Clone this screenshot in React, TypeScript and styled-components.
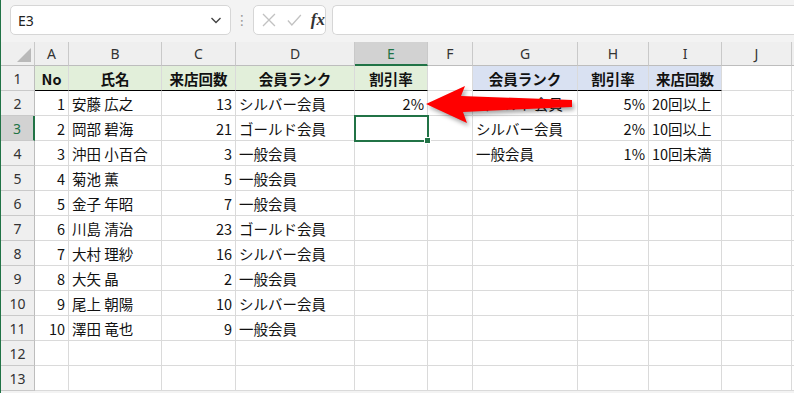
import React from "react";
import styled, { createGlobalStyle, css } from "styled-components";

const GlobalStyle = createGlobalStyle`
  html, body {
    margin: 0;
    padding: 0;
    background: #ffffff;
    overflow: hidden;
  }
`;

const GREEN = "#217346";
const GRID = "#dadada";

const Frame = styled.div`
  position: relative;
  width: 794px;
  height: 393px;
  box-sizing: border-box;
  border-left: 1px solid ${GREEN};
  background: #f3f3f3;
  overflow: hidden;
  font-family: "Noto Sans CJK JP", "Noto Sans", sans-serif;
`;

// 数式バー
const FormulaBar = styled.div`
  display: flex;
  align-items: center;
  height: 42px;
  padding: 5px 0 7px 9px;
  box-sizing: border-box;
`;

const Box = styled.div<{ $w?: number; $grow?: boolean }>`
  display: flex;
  align-items: center;
  height: 30px;
  box-sizing: border-box;
  background: #ffffff;
  border: 1px solid #d6d6d6;
  border-radius: 5px;
  ${(p) => p.$w && css`width: ${p.$w}px;`}
  ${(p) => p.$grow && css`flex: 1; margin-left: 6px; border-right: none; border-radius: 5px 0 0 5px;`}
`;

const NameText = styled.span`
  flex: 1;
  padding-left: 7px;
  font-family: "Noto Sans", "Liberation Sans", sans-serif;
  font-size: 14px;
  color: #222;
`;

const Dots = styled.span`
  width: 22px;
  text-align: center;
  color: #9a9a9a;
  font-size: 14px;
  font-family: "DejaVu Sans", sans-serif;
`;

const FxIcon = styled.span`
  font-family: "Liberation Serif", serif;
  font-style: italic;
  font-weight: 600;
  font-size: 17px;
  color: #333;
  margin-left: 6px;
`;

const Sheet = styled.div`
  display: grid;
  grid-template-columns: 34px 34px 93px 74px 119px 73px 45px 105px 71px 73px 70px 1fr;
  grid-template-rows: 24px repeat(13, 25px);
  background: #ffffff;
`;

const ColHead = styled.div<{ $active?: boolean }>`
  display: flex;
  align-items: center;
  justify-content: center;
  box-sizing: border-box;
  background: ${(p) => (p.$active ? "#d2d2d2" : "#efefef")};
  border-right: 1px solid #c9c9c9;
  border-bottom: ${(p) => (p.$active ? `2px solid ${GREEN}` : "1px solid #bdbdbd")};
  font-family: "Noto Sans", "Liberation Sans", sans-serif;
  font-size: 14px;
  color: ${(p) => (p.$active ? GREEN : "#333")};
`;

const Corner = styled(ColHead)`
  position: relative;
  &::after {
    content: "";
    position: absolute;
    right: 3px;
    bottom: 3px;
    border-style: solid;
    border-width: 0 0 14px 14px;
    border-color: transparent transparent #b9b9b9 transparent;
  }
`;

const RowHead = styled.div<{ $active?: boolean }>`
  display: flex;
  align-items: center;
  justify-content: center;
  box-sizing: border-box;
  background: ${(p) => (p.$active ? "#d2d2d2" : "#efefef")};
  border-right: ${(p) => (p.$active ? `2px solid ${GREEN}` : "1px solid #bdbdbd")};
  border-bottom: 1px solid #c9c9c9;
  font-family: "Noto Sans", "Liberation Sans", sans-serif;
  font-size: 14px;
  color: ${(p) => (p.$active ? GREEN : "#333")};
`;

const Cell = styled.div<{
  $bg?: string;
  $align?: "left" | "right" | "center";
  $bold?: boolean;
  $underline?: boolean;
  $selected?: boolean;
}>`
  position: relative;
  display: flex;
  align-items: center;
  justify-content: ${(p) =>
    p.$align === "right" ? "flex-end" : p.$align === "center" ? "center" : "flex-start"};
  padding: 0 3px;
  box-sizing: border-box;
  background: ${(p) => p.$bg || "#ffffff"};
  border-right: 1px solid ${GRID};
  border-bottom: 1px solid ${(p) => (p.$underline ? "#000000" : GRID)};
  font-size: 14.5px;
  font-weight: ${(p) => (p.$bold ? 700 : 400)};
  color: #111;
  white-space: nowrap;
  ${(p) =>
    p.$selected &&
    css`
      outline: 2px solid ${GREEN};
      outline-offset: -1px;
      z-index: 1;
      &::after {
        content: "";
        position: absolute;
        right: -4px;
        bottom: -4px;
        width: 5px;
        height: 5px;
        background: ${GREEN};
        border: 1px solid #ffffff;
      }
    `}
`;

const ArrowLayer = styled.svg`
  position: absolute;
  top: 0;
  left: 0;
  width: 794px;
  height: 393px;
  pointer-events: none;
  z-index: 5;
  filter: drop-shadow(2px 3px 2px rgba(0, 0, 0, 0.35));
`;

const COLS = ["A", "B", "C", "D", "E", "F", "G", "H", "I", "J", ""];
const GREEN_BG = "#e2efda";
const BLUE_BG = "#d9e1f2";

const members: [number, string, number, string][] = [
  [1, "安藤 広之", 13, "シルバー会員"],
  [2, "岡部 碧海", 21, "ゴールド会員"],
  [3, "沖田 小百合", 3, "一般会員"],
  [4, "菊池 薫", 5, "一般会員"],
  [5, "金子 年昭", 7, "一般会員"],
  [6, "川島 清治", 23, "ゴールド会員"],
  [7, "大村 理紗", 16, "シルバー会員"],
  [8, "大矢 晶", 2, "一般会員"],
  [9, "尾上 朝陽", 10, "シルバー会員"],
  [10, "澤田 竜也", 9, "一般会員"],
];

const ranks: [string, string, string][] = [
  ["ゴールド会員", "5%", "20回以上"],
  ["シルバー会員", "2%", "10回以上"],
  ["一般会員", "1%", "10回未満"],
];

const Blank: React.FC<{ n: number }> = ({ n }) => (
  <>
    {Array.from({ length: n }).map((_, i) => (
      <Cell key={i} />
    ))}
  </>
);

const App: React.FC = () => {
  const rows: React.ReactNode[] = [];

  // 見出し行
  rows.push(
    <React.Fragment key="r1">
      <RowHead>1</RowHead>
      <Cell $bg={GREEN_BG} $align="center" $bold $underline>No</Cell>
      <Cell $bg={GREEN_BG} $align="center" $bold $underline>氏名</Cell>
      <Cell $bg={GREEN_BG} $align="center" $bold $underline>来店回数</Cell>
      <Cell $bg={GREEN_BG} $align="center" $bold $underline>会員ランク</Cell>
      <Cell $bg={GREEN_BG} $align="center" $bold $underline>割引率</Cell>
      <Cell />
      <Cell $bg={BLUE_BG} $align="center" $bold $underline>会員ランク</Cell>
      <Cell $bg={BLUE_BG} $align="center" $bold $underline>割引率</Cell>
      <Cell $bg={BLUE_BG} $align="center" $bold $underline>来店回数</Cell>
      <Blank n={2} />
    </React.Fragment>
  );

  for (let r = 2; r <= 13; r++) {
    const m = members[r - 2];
    const k = ranks[r - 2];
    rows.push(
      <React.Fragment key={r}>
        <RowHead $active={r === 3}>{r}</RowHead>
        <Cell $align="right">{m ? m[0] : ""}</Cell>
        <Cell>{m ? m[1] : ""}</Cell>
        <Cell $align="right">{m ? m[2] : ""}</Cell>
        <Cell>{m ? m[3] : ""}</Cell>
        <Cell $align="right" $selected={r === 3}>{r === 2 ? "2%" : ""}</Cell>
        <Cell />
        <Cell>{k ? k[0] : ""}</Cell>
        <Cell $align="right">{k ? k[1] : ""}</Cell>
        <Cell>{k ? k[2] : ""}</Cell>
        <Blank n={2} />
      </React.Fragment>
    );
  }

  return (
    <>
      <GlobalStyle />
      <Frame>
        <FormulaBar>
          <Box $w={221}>
            <NameText>E3</NameText>
            <svg width="16" height="16" viewBox="0 0 16 16" style={{ marginRight: 6 }}>
              <path d="M3.5 6 L8 10.5 L12.5 6" fill="none" stroke="#444" strokeWidth="1.4" />
            </svg>
          </Box>
          <Dots>⋮</Dots>
          <Box $w={73}>
            <svg width="44" height="16" viewBox="0 0 44 16" style={{ marginLeft: 7 }}>
              <path d="M2 2 L14 14 M14 2 L2 14" stroke="#c2c2c2" strokeWidth="1.3" fill="none" />
              <path d="M27 8.5 L31 13 L40 3" stroke="#c2c2c2" strokeWidth="1.3" fill="none" />
            </svg>
            <FxIcon>fx</FxIcon>
          </Box>
          <Box $grow />
        </FormulaBar>
        <Sheet>
          <Corner />
          {COLS.map((c) => (
            <ColHead key={c || "k"} $active={c === "E"}>
              {c}
            </ColHead>
          ))}
          {rows}
        </Sheet>
        <ArrowLayer viewBox="0 0 794 393">
          <path
            d="M425 104 L464 86 L460 96 L571 100 L571 107 L462 112 L466 123 Z"
            fill="#ff0000"
          />
        </ArrowLayer>
      </Frame>
    </>
  );
};

export default App;
